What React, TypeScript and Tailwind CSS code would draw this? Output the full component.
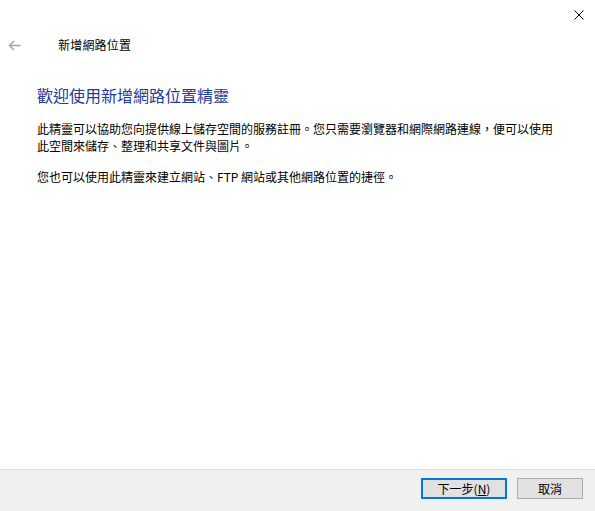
const FONT = "font-['Segoe_UI','Noto_Sans_CJK_TC',sans-serif]"

export default function App() {
  return (
    <div className={`flex h-[511px] w-[595px] flex-col bg-white text-black ${FONT}`}>
      {/* Close */}
      <div className="flex h-[30px] justify-end pr-[11px] pt-[10px]">
        <svg width="10" height="10" viewBox="0 0 10 10">
          <path d="M0.5 0.5 L9.5 9.5 M9.5 0.5 L0.5 9.5" stroke="#000" strokeWidth="1" />
        </svg>
      </div>

      {/* Title row */}
      <div className="flex h-[30px] items-center">
        <div className="ml-[8px] flex w-[13px] items-center">
          <svg width="13" height="11" viewBox="0 0 13 11">
            <path d="M12.5 5.5 H1.5 M6 1 L1.5 5.5 L6 10" stroke="#a6a6a6" strokeWidth="1.5" fill="none" />
          </svg>
        </div>
        <span className="ml-[37px] text-[12px] leading-[16px] tracking-[0.2px]">新增網路位置</span>
      </div>

      {/* Content */}
      <div className="flex-1 pl-[37px]">
        <h1 className="mt-[24px] text-[16px] leading-[22px] font-normal text-[#1a3ba0]">
          歡迎使用新增網路位置精靈
        </h1>
        <p className="mt-[14px] w-[523px] text-[12px] leading-[17px]">
          此精靈可以協助您向提供線上儲存空間的服務註冊。您只需要瀏覽器和網際網路連線，便可以使用此空間來儲存、整理和共享文件與圖片。
        </p>
        <p className="mt-[14px] w-[523px] text-[12px] leading-[17px]">
          您也可以使用此精靈來建立網站、FTP 網站或其他網路位置的捷徑。
        </p>
      </div>

      {/* Footer */}
      <div className="flex h-[42px] items-start justify-end gap-[10px] border-t border-[#dfdfdf] bg-[#f0f0f0] pr-[12px] pt-[8px]">
        <button className="flex h-[21px] w-[86px] items-center justify-center border-2 border-[#0078d7] bg-[#e1e1e1] text-[12px] leading-none">
          下一步(<span className="underline">N</span>)
        </button>
        <button className="flex h-[21px] w-[66px] items-center justify-center border border-[#adadad] bg-[#e1e1e1] text-[12px] leading-none">
          取消
        </button>
      </div>
    </div>
  )
}
